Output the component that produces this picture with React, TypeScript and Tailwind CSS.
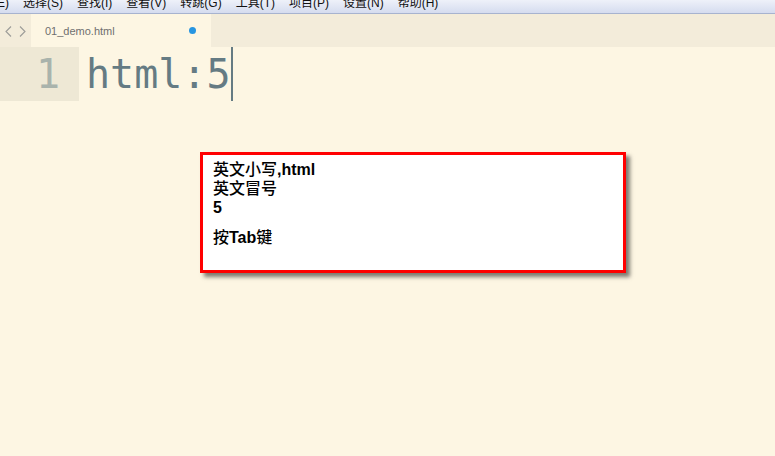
import React from "react";

const menus = ["编辑(E)", "选择(S)", "查找(I)", "查看(V)", "转跳(G)", "工具(T)", "项目(P)", "设置(N)", "帮助(H)"];

export default function App() {
  return (
    <div className="w-[775px] h-[456px] overflow-hidden bg-[#fdf6e3] flex flex-col" style={{ fontFamily: '"Liberation Sans", "Noto Sans CJK SC", sans-serif' }}>
      {/* menu bar */}
      <div className="h-[14px] shrink-0 overflow-hidden bg-gradient-to-b from-[#eef1f9] to-[#d5dcef] border-b border-[#a7b3cf] relative">
        <div className="flex gap-[14px] ml-[-31px] mt-[-5px] text-[12px] leading-[16px] text-[#111]">
          {menus.map((m) => (
            <span key={m} className="whitespace-nowrap">{m}</span>
          ))}
        </div>
      </div>
      {/* tab bar */}
      <div className="h-[33px] shrink-0 flex items-stretch bg-[#f3ecda]">
        <div className="w-[31px] flex items-center justify-center gap-[7px] pt-[2px]">
          <svg width="7" height="11" viewBox="0 0 7 11"><path d="M6 0.5 L1 5.5 L6 10.5" fill="none" stroke="#9c9c98" strokeWidth="1.1" /></svg>
          <svg width="7" height="11" viewBox="0 0 7 11"><path d="M1 0.5 L6 5.5 L1 10.5" fill="none" stroke="#9c9c98" strokeWidth="1.1" /></svg>
        </div>
        <div className="w-[180px] bg-[#fdf6e3] flex items-center pl-[14px] pr-[15px]">
          <span className="text-[11px] text-[#6f6f6f] flex-1 pt-[1px]">01_demo.html</span>
          <span className="w-[7px] h-[7px] rounded-full bg-[#2795e1]" />
        </div>
      </div>
      {/* editor */}
      <div className="flex-1 relative">
        <div className="flex h-[54px]">
          <div className="w-[79px] bg-[#eee8d5] flex items-center justify-end pr-[19px] text-[40px] text-[#a9b3ac]" style={{ fontFamily: '"DejaVu Sans Mono", monospace' }}>1</div>
          <div className="flex items-center pl-[7px] text-[40px] text-[#657b83]" style={{ fontFamily: '"DejaVu Sans Mono", monospace' }}>
            <span>html:5</span>
            <span className="w-[2px] h-[54px] bg-[#657b83]" />
          </div>
        </div>
        {/* popup */}
        <div className="absolute left-[200px] top-[105px] w-[426px] h-[121px] bg-white border-[3px] border-[#ff0000] shadow-[4px_4px_4px_rgba(0,0,0,0.5)] pl-[10px] pt-[5px] text-[16px] leading-[19px] font-bold text-black">
          <div><span className="font-medium">英文小写</span>,html</div>
          <div className="font-medium">英文冒号</div>
          <div>5</div>
          <div className="mt-[11px]"><span className="font-medium">按</span>Tab<span className="font-medium">键</span></div>
        </div>
      </div>
    </div>
  );
}
